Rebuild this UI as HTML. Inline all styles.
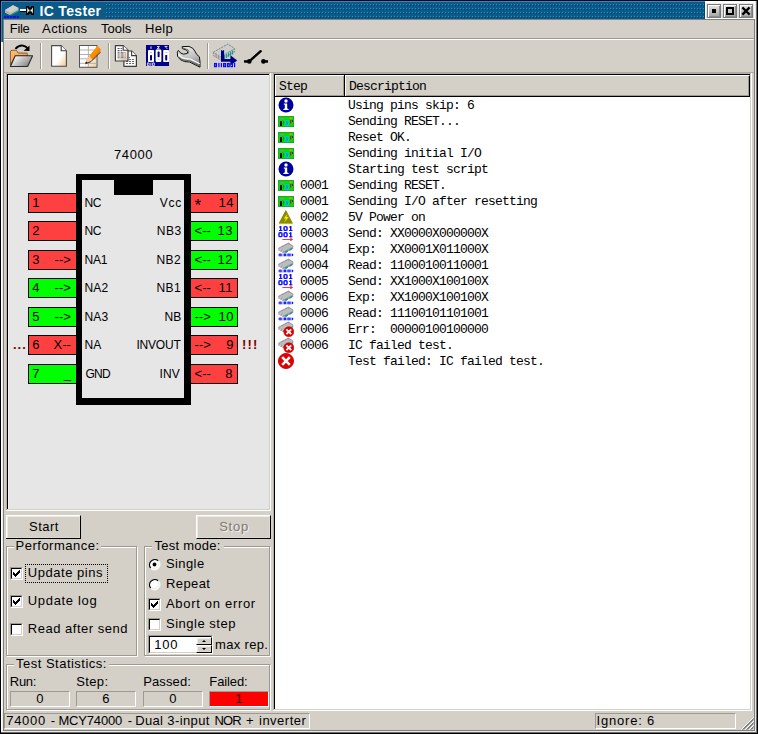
<!DOCTYPE html>
<html>
<head>
<meta charset="utf-8">
<title>IC Tester</title>
<style>
html,body{margin:0;padding:0;}
body{width:758px;height:734px;overflow:hidden;background:#000;position:relative;font-family:"Liberation Sans",sans-serif;font-size:14px;color:#000;}
.a{position:absolute;}
.t{position:absolute;white-space:nowrap;line-height:16px;height:16px;font-size:13px;letter-spacing:0.4px;}
.m{position:absolute;margin-top:1px;white-space:pre;font-family:"Liberation Mono",monospace;font-size:13px;letter-spacing:-0.8px;line-height:16px;height:16px;}
.pin{position:absolute;width:47px;height:18px;border:1px solid #000;}
.pin.rt{width:46px;}
.pin.r{background:#ff4040;}
.pin.g{background:#00ff00;}
.pin span{position:absolute;top:1px;line-height:16px;font-size:13px;letter-spacing:0.5px;white-space:pre;}
.lbl{position:absolute;line-height:16px;font-size:13px;white-space:nowrap;letter-spacing:0.25px;}
.groove{position:absolute;border:1px solid #9e9a92;box-shadow:1px 1px 0 #fff, inset 1px 1px 0 #fff;}
.sunk{position:absolute;border-top:1px solid #9e9a92;border-left:1px solid #9e9a92;border-right:1px solid #fff;border-bottom:1px solid #fff;box-sizing:border-box;}
.btn{position:absolute;box-sizing:border-box;border-top:1px solid #fff;border-left:1px solid #fff;border-right:1px solid #000;border-bottom:1px solid #000;background:#d4d0c8;}
.btn:after{content:"";position:absolute;left:0;top:0;right:0;bottom:0;border-left:1px solid #eceae4;border-top:1px solid #eceae4;border-right:1px solid #dcd8d0;border-bottom:1px solid #dcd8d0;}
.cb{position:absolute;width:13px;height:13px;box-sizing:border-box;background:#fff;border-top:1px solid #9e9a92;border-left:1px solid #9e9a92;border-right:1px solid #fff;border-bottom:1px solid #fff;}
.cb:after{content:"";position:absolute;left:0;top:0;width:10px;height:10px;border-top:1px solid #000;border-left:1px solid #000;border-right:1px solid #d4d0c8;border-bottom:1px solid #d4d0c8;box-sizing:content-box;width:9px;height:9px;}
.tb{top:4px;width:14px;height:14px;box-sizing:border-box;border:1px solid #7a7a7a;background:linear-gradient(#e6e6e6,#a4a4a4);box-shadow:inset 1px 1px 0 #fff, inset -1px -1px 0 #8e8e8e;}
.hd{box-sizing:border-box;background:#d4d0c8;border-top:1px solid #fff;border-left:1px solid #fff;border-right:1px solid #000;border-bottom:1px solid #000;box-shadow:inset -1px -1px 0 #9e9a92;}
</style>
</head>
<body>
<!-- window face -->
<div class="a" style="left:1px;top:1px;width:756px;height:732px;background:#d4d0c8;"></div>

<!-- ===== window frame ===== -->
<div class="a" style="left:1px;top:1px;width:1px;height:41px;background:#1890d8;"></div>
<div class="a" style="left:2px;top:1px;width:1px;height:41px;background:#0b5a88;"></div>
<div class="a" style="left:1px;top:42px;width:1px;height:690px;background:#fff;"></div>
<div class="a" style="left:2px;top:42px;width:1px;height:689px;background:#eeece8;"></div>
<div class="a" style="left:3px;top:19px;width:1px;height:712px;background:#808080;"></div>
<div class="a" style="left:754px;top:19px;width:1px;height:712px;background:#808080;"></div>
<div class="a" style="left:755px;top:1px;width:1px;height:731px;background:#e8e8e8;"></div>
<div class="a" style="left:756px;top:1px;width:1px;height:732px;background:#6e6e6e;"></div>
<div class="a" style="left:3px;top:730px;width:752px;height:1px;background:#808080;"></div>
<div class="a" style="left:2px;top:731px;width:754px;height:1px;background:#e8e8e8;"></div>
<div class="a" style="left:1px;top:732px;width:756px;height:1px;background:#6e6e6e;"></div>
<!-- ===== title bar ===== -->
<div class="a" style="left:2px;top:1px;width:703px;height:18px;background:#0b5a88;"></div>
<div class="a" style="left:1px;top:1px;width:704px;height:1px;background:#1890d8;"></div>
<svg class="a" style="left:104px;top:2px;" width="601" height="17" viewBox="104 2 601 17">
<defs><pattern id="dots" x="106" y="4" width="3" height="4" patternUnits="userSpaceOnUse"><rect x="0" y="0" width="1" height="1" fill="#1c94dc"/><rect x="1" y="1" width="1" height="1" fill="#073a5a"/></pattern></defs>
<rect x="106" y="4" width="599" height="14" fill="url(#dots)" shape-rendering="crispEdges"/>
</svg>
<div class="a" style="left:704px;top:2px;width:1px;height:17px;background:#06405f;"></div><div class="a" style="left:705px;top:1px;width:50px;height:18px;background:#fff;"></div><div class="a" style="left:706px;top:3px;width:48px;height:15px;background:linear-gradient(#ececec,#d8d8d8);"></div>
<div class="a" style="left:3px;top:19px;width:752px;height:1px;background:#808080;"></div>
<div class="a" id="ttl" style="left:39.4px;top:3px;line-height:16px;font-size:14px;font-weight:bold;color:#fff;white-space:nowrap;letter-spacing:0.35px;">IC Tester</div>
<!-- title buttons -->
<div class="a tb" style="left:707px;"></div>
<div class="a tb" style="left:723px;"></div>
<div class="a tb" style="left:739px;"></div>
<div class="a" style="left:712px;top:9px;width:4px;height:4px;background:#000;"></div>
<div class="a" style="left:726px;top:7px;width:4px;height:4px;border:2px solid #000;background:#c8c8c8;"></div>
<svg class="a" style="left:739px;top:4px;" width="14" height="14" viewBox="0 0 14 14"><path d="M4.2 4.2 L9.8 9.8 M9.8 4.2 L4.2 9.8" stroke="#000" stroke-width="2.3" stroke-linecap="square"/></svg>
<!-- ===== menu bar ===== -->
<div class="a" style="left:4px;top:38px;width:750px;height:1px;background:#9e9a92;"></div>
<div class="a" style="left:4px;top:39px;width:750px;height:1px;background:#fff;"></div>
<div class="t mn" id="m1" style="left:9.8px;top:21px;letter-spacing:-0.35px;">File</div>
<div class="t mn" id="m2" style="left:42.1px;top:21px;letter-spacing:0.4px;">Actions</div>
<div class="t mn" id="m3" style="left:101px;top:21px;letter-spacing:0px;">Tools</div>
<div class="t mn" id="m4" style="left:145px;top:21px;letter-spacing:0.35px;">Help</div>

<!-- ===== toolbar ===== -->
<div class="a" style="left:40px;top:43px;width:1px;height:26px;background:#9e9a92;"></div><div class="a" style="left:41px;top:43px;width:1px;height:26px;background:#fff;"></div>
<div class="a" style="left:108px;top:43px;width:1px;height:26px;background:#9e9a92;"></div><div class="a" style="left:109px;top:43px;width:1px;height:26px;background:#fff;"></div>
<div class="a" style="left:207px;top:43px;width:1px;height:26px;background:#9e9a92;"></div><div class="a" style="left:208px;top:43px;width:1px;height:26px;background:#fff;"></div>
<svg class="a" style="left:0px;top:0px;" width="280" height="74" viewBox="0 0 280 74">
<defs>
<linearGradient id="gFold" x1="0" y1="0" x2="1" y2="0.6"><stop offset="0" stop-color="#f4f4f4"/><stop offset="0.35" stop-color="#e0e0e0"/><stop offset="1" stop-color="#858585"/></linearGradient>
<linearGradient id="gOr" x1="0" y1="0" x2="1" y2="1"><stop offset="0" stop-color="#ffc27a"/><stop offset="1" stop-color="#e88a30"/></linearGradient>
<linearGradient id="gDoc" x1="0.2" y1="0.2" x2="1" y2="1"><stop offset="0" stop-color="#ffffff"/><stop offset="0.45" stop-color="#ffffff"/><stop offset="1" stop-color="#efc890"/></linearGradient>
<linearGradient id="gDoc2" x1="0.2" y1="0.2" x2="1" y2="1"><stop offset="0" stop-color="#ffffff"/><stop offset="0.5" stop-color="#fbf3ec"/><stop offset="1" stop-color="#e8b898"/></linearGradient>
<linearGradient id="gPen" x1="0" y1="0" x2="1" y2="1"><stop offset="0" stop-color="#ffb040"/><stop offset="0.5" stop-color="#ff8c00"/><stop offset="1" stop-color="#c86000"/></linearGradient>
<linearGradient id="gWr" x1="0" y1="0" x2="0.3" y2="1"><stop offset="0" stop-color="#f4f4f4"/><stop offset="0.6" stop-color="#c4c4c4"/><stop offset="1" stop-color="#8c8c8c"/></linearGradient>
</defs>
<!-- title icon: chip -->
<g id="tchip">
<path d="M5 10 L13 5.2 L18.5 8 L18.5 10.5 L10 15 L5 12.5 Z" fill="#c4c0bc"/>
<path d="M5 10 L13 5.2 L18.5 8 L10 12.5 Z" fill="#d2cecc"/>
<path d="M10.5 14.2 L18.5 10 L18.5 11.5 L10.5 15.6 Z" fill="#2f9a92"/>
<path d="M5 10 L10 12.5 L10 15 L5 12.5 Z" fill="#b4b0ac"/>
<rect x="4" y="16" width="15" height="2" fill="#0c14e8"/>
<rect x="6" y="16" width="1" height="2" fill="#0b5a88" opacity=".5"/><rect x="9" y="16" width="1" height="2" fill="#0b5a88" opacity=".6"/><rect x="12" y="16" width="1" height="2" fill="#0b5a88" opacity=".5"/><rect x="16" y="16" width="1" height="2" fill="#0b5a88" opacity=".6"/>
</g>
<rect x="20" y="11" width="7" height="1" fill="#000"/>
<rect x="20" y="9" width="7" height="2" fill="#fff"/>
<path d="M26 6 L28.5 6 L30 8 L31.5 6 L34 6 L34 15 L31.5 15 L30 13 L28.5 15 L26 15 Z" fill="#000"/>
<path d="M27.3 7.3 L29.2 10.4 L27.3 13.6 Z M32.8 7.3 L30.8 10.4 L32.8 13.6 Z" fill="#fff"/>
<rect x="29.6" y="9.6" width="0.9" height="1.8" fill="#fff"/>

<!-- open -->
<path d="M10.4 65 L10.4 52 Q10.4 50.3 12 50.3 L15.6 50.3 Q16.8 50.3 17.4 51.6 L18.2 53 L26.3 53 Q27.6 53 27.6 54.4 L27.6 56 L15.5 56 Z" fill="url(#gOr)" stroke="#6a4418" stroke-width="0.8"/>
<path d="M15.2 55.7 L32.6 55.7 L27.6 66.5 L10.4 66.5 Z" fill="url(#gFold)" stroke="#2a2a2a" stroke-width="1.1" stroke-linejoin="round"/>
<path d="M15.4 48.8 Q18.6 45.2 22.4 45.5 Q25.4 45.8 27.6 48.2" fill="none" stroke="#000" stroke-width="1.9"/>
<path d="M29.5 45.4 L29.5 50.9 L23.6 50.7 Z" fill="#000"/>
<!-- new -->
<path d="M51.6 45.6 L61.2 45.6 L66.4 50.8 L66.4 66.2 L51.6 66.2 Z" fill="url(#gDoc)" stroke="#4a4a4a" stroke-width="1.1" stroke-linejoin="round"/>
<path d="M61.2 45.6 L61.2 50.8 L66.4 50.8" fill="#f6f6f6" stroke="#3a3a3a" stroke-width="1.1" stroke-linejoin="round"/>
<!-- edit -->
<rect x="79.5" y="45.5" width="17.5" height="21.8" fill="url(#gDoc)" stroke="#555" stroke-width="1"/>
<path d="M80 50H97M80 54.5H97M80 58.8H97M80 63.3H97M88.4 46V67" stroke="#a8a8a8" stroke-width="0.9" fill="none"/>
<path d="M85.2 63.6 L87.3 58.2 L97.2 46 L100.6 48.8 L100.4 52 L91 61.4 Z" fill="url(#gPen)"/>
<path d="M85.2 63.6 L87.3 58.2 L89.6 56 L92.6 59.8 L91 61.4 Z" fill="#f6c8a4"/>
<path d="M85.2 63.6 L86 61.4 L87.6 62.7 Z" fill="#111"/>
<path d="M85.4 63.8 L91 61.6 L100.4 52.2" stroke="#222" stroke-width="0.9" fill="none"/>
<!-- copy -->
<path d="M123.9 51 L131.6 51 L136.4 55.6 L136.4 66.3 L123.9 66.3 Z" fill="#fbfbfb" stroke="#3c3c3c" stroke-width="1.2" stroke-linejoin="round"/>
<path d="M131.6 51 L131.6 55.6 L136.4 55.6" fill="#fff" stroke="#3c3c3c" stroke-width="1.1"/>
<path d="M126 57.5h4M126 59.5h8M126 61.5h8M126 63.5h8" stroke="#6a6a6a" stroke-width="1.1" stroke-dasharray="2 1"/>
<path d="M115.4 45.6 L123.2 45.6 L128 50.2 L128 61 L115.4 61 Z" fill="url(#gDoc2)" stroke="#3c3c3c" stroke-width="1.2" stroke-linejoin="round"/>
<path d="M123.2 45.6 L123.2 50.2 L128 50.2" fill="#fff" stroke="#3c3c3c" stroke-width="1.1"/>
<path d="M117.6 48.5h4.5M117.6 50.6h4.5M117.6 52.8h8M117.6 55h8M117.6 57.2h8" stroke="#5c5c5c" stroke-width="1.2" stroke-dasharray="2 1 3 1"/>
<path d="M117.6 58.9h8" stroke="#a0a0a0" stroke-width="0.6"/>
<!-- dip switch -->
<rect x="146" y="45" width="23" height="21" fill="#00008a"/>
<rect x="148" y="50" width="6" height="12" rx="0.8" fill="#fff"/><rect x="155.6" y="49.6" width="5.8" height="12.3" rx="0.8" fill="#fff"/><rect x="163.2" y="50" width="5.8" height="12" rx="0.8" fill="#fff"/>
<rect x="150" y="55" width="2" height="5.4" rx="0.6" fill="#00008a"/><rect x="157.6" y="51.6" width="2" height="5.6" rx="0.6" fill="#00008a"/><rect x="165.2" y="55" width="2" height="5.4" rx="0.6" fill="#00008a"/>
<rect x="150" y="52" width="2" height="1" fill="#c4c4c4"/><rect x="157.6" y="58.8" width="2" height="1" fill="#c4c4c4"/><rect x="165.2" y="52" width="2" height="1" fill="#c4c4c4"/>
<path d="M151 46.3v2.6M157 46.6h2.4l-2.2 2.2h2.4M164.6 46.4h2.6l-1.2 1.2 1.2 1.2" stroke="#ffffff" stroke-width="0.9" fill="none"/>
<path d="M147.4 62.9h1.7v2.9h-1.7zM150.9 62.6v3.4M152.6 62.9h1.7v2.9h-1.7z" stroke="#fff" stroke-width="0.8" fill="none"/>
<!-- wrench -->
<path d="M182.2 46.6 L189 46.4 Q193.6 47.6 195.4 52 Q196.2 54.8 199.4 56.8 L200 61.8 L200 67.2 L189.6 62 L184.6 61.6 Q179.4 60.2 177.6 56.4 L177.3 52.2 L178.4 50.4 Q180.4 54 183.6 54.2 L187.4 53.4 Q188.4 51.4 186.4 50 L182.4 48.6 Z" fill="url(#gWr)" stroke="#111" stroke-width="1" stroke-linejoin="round"/>
<path d="M178.6 54.5 Q181 58 185.2 58.6 L190.4 59 L199.8 63.8" stroke="#fff" stroke-width="1.1" fill="none"/>
<path d="M178.4 57 Q181 60 185.4 60.4 L190 61 L199.8 66" stroke="#6a6a6a" stroke-width="1.2" fill="none"/>
<path d="M183.2 48 L188 49.8 Q189.6 51.4 188.4 53.4" stroke="#777" stroke-width="1" fill="none"/>
<!-- ic read -->
<path d="M213.4 52.2 L227.8 44.2 L234.6 48.6 L234.6 52 L220.6 60 L213.4 55.6 Z" fill="#c2c2c2" stroke="#858585" stroke-width="0.9" stroke-dasharray="2 1"/>
<path d="M213.4 52.2 L227.8 44.2 L234.6 48.6 L220.6 56.6 Z" fill="#cdcdcd" stroke="#8a8a8a" stroke-width="0.9" stroke-dasharray="2 1"/>
<path d="M216 54.2v2.6M218.6 55.8v2.6" stroke="#8a8a8a" stroke-width="0.9"/>
<path d="M224.6 55v4M226.6 54v4M228.6 52.8v4M230.6 51.6v4M232.6 50.4v4" stroke="#0a9a94" stroke-width="1.1"/>
<path d="M221 50.2 L222 50.2 L222.6 51 L223.2 50.2 L224.1 50.2 L224.1 59 L230.4 59 L230.4 55.2 L237.2 60.5 L230.4 65.4 L230.4 61.8 L221 61.8 Z" fill="#00007e"/>
<g fill="none" stroke="#0808ff" stroke-width="1.25">
<rect x="214.6" y="63.6" width="1.8" height="3"/><path d="M218.9 63v4.2M221.4 63v4.2"/><rect x="223.6" y="63.6" width="1.8" height="3"/><rect x="227.4" y="63.6" width="1.8" height="3"/><rect x="231" y="63.6" width="1.4" height="3"/><path d="M234.6 63v4.2"/>
</g>
<!-- switch -->
<rect x="244" y="60.2" width="5.5" height="2.5" fill="#000"/><circle cx="249.3" cy="61.4" r="2.3" fill="#000"/>
<path d="M249.5 61.2 L260.7 51.2" stroke="#000" stroke-width="2.4" stroke-linecap="round"/>
<circle cx="263.4" cy="61.4" r="2.3" fill="#000"/><rect x="263.4" y="60.2" width="4.6" height="2.5" fill="#000"/>
</svg>

<!-- ===== left panel (chip view) ===== -->
<div class="a" style="left:4px;top:72px;width:750px;height:1px;background:#aeaaa2;"></div>
<div class="a" style="left:6px;top:73px;width:264px;height:437px;background:#b2aea6;"></div>
<div class="a" style="left:7px;top:74px;width:263px;height:436px;background:#000;"></div>
<div class="a" style="left:8px;top:75px;width:261px;height:434px;background:#e6e6e6;"></div>
<div class="a" style="left:8px;top:75px;width:261px;height:1px;background:#f2f2f2;"></div>
<div class="a" style="left:8px;top:75px;width:1px;height:434px;background:#f2f2f2;"></div>
<div class="a" style="left:6px;top:510px;width:265px;height:1px;background:#fff;"></div>
<div class="a" style="left:270px;top:73px;width:1px;height:438px;background:#fff;"></div>
<div class="a" style="left:269px;top:74px;width:1px;height:436px;background:#d4d0c8;"></div>
<div class="a" style="left:7px;top:509px;width:263px;height:1px;background:#d4d0c8;"></div>
<!-- chip body -->
<div class="a" style="left:76px;top:174px;width:115px;height:231px;background:#000;"></div>
<div class="a" style="left:82px;top:180px;width:102px;height:218px;background:#e6e6e6;"></div>
<div class="a" style="left:114px;top:180px;width:39px;height:15px;background:#000;"></div>
<div class="lbl" id="cn" style="left:100.6px;top:147px;width:66px;text-align:center;letter-spacing:0.6px;">74000</div>
<div class="pin r" style="left:28px;top:193px;"><span style="left:3.2px;">1</span><span style="right:5px;letter-spacing:0.05px;"></span></div><div class="pin r" style="left:28px;top:221px;"><span style="left:3.2px;">2</span><span style="right:5px;letter-spacing:0.05px;"></span></div><div class="pin r" style="left:28px;top:250px;"><span style="left:3.2px;">3</span><span style="right:5px;letter-spacing:0.05px;">--&gt;</span></div><div class="pin g" style="left:28px;top:278px;"><span style="left:3.2px;">4</span><span style="right:5px;letter-spacing:0.05px;">--&gt;</span></div><div class="pin g" style="left:28px;top:307px;"><span style="left:3.2px;">5</span><span style="right:5px;letter-spacing:0.05px;">--&gt;</span></div><div class="pin r" style="left:28px;top:335px;"><span style="left:3.2px;">6</span><span style="right:5px;letter-spacing:0.05px;">X--</span></div><div class="pin g" style="left:28px;top:364px;"><span style="left:3.2px;">7</span><span style="right:5px;letter-spacing:0.05px;">_</span></div><div class="pin r rt" style="left:190px;top:193px;"><span style="left:3.5px;font-size:17px;top:4px;">*</span><span style="right:3px;">14</span></div><div class="pin g rt" style="left:190px;top:221px;"><span style="left:3.6px;letter-spacing:0.05px;">&lt;--</span><span style="right:4px;">13</span></div><div class="pin g rt" style="left:190px;top:250px;"><span style="left:3.6px;letter-spacing:0.05px;">&lt;--</span><span style="right:4px;">12</span></div><div class="pin r rt" style="left:190px;top:278px;"><span style="left:3.6px;letter-spacing:0.05px;">&lt;--</span><span style="right:4px;">11</span></div><div class="pin g rt" style="left:190px;top:307px;"><span style="left:3.6px;letter-spacing:0.05px;">--&gt;</span><span style="right:3px;">10</span></div><div class="pin r rt" style="left:190px;top:335px;"><span style="left:3.6px;letter-spacing:0.05px;">--&gt;</span><span style="right:3px;">9</span></div><div class="pin r rt" style="left:190px;top:364px;"><span style="left:3.6px;letter-spacing:0.05px;">&lt;--</span><span style="right:4px;">8</span></div><div class="lbl" style="left:84.4px;top:195px;font-size:12px;letter-spacing:-0.40px;">NC</div><div class="lbl" style="left:84.4px;top:223px;font-size:12px;letter-spacing:-0.40px;">NC</div><div class="lbl" style="left:84.5px;top:252px;font-size:12px;letter-spacing:-0.15px;">NA1</div><div class="lbl" style="left:84.5px;top:280px;font-size:12px;letter-spacing:0.20px;">NA2</div><div class="lbl" style="left:84.5px;top:309px;font-size:12px;letter-spacing:0.20px;">NA3</div><div class="lbl" style="left:84.5px;top:337px;font-size:12px;letter-spacing:0.10px;">NA</div><div class="lbl" style="left:85.5px;top:366px;font-size:12px;letter-spacing:-0.75px;">GND</div><div class="lbl" style="left:159.7px;top:195px;font-size:12px;letter-spacing:0.80px;">Vcc</div>
<div class="lbl" style="left:156.7px;top:223px;font-size:12px;letter-spacing:0.55px;">NB3</div>
<div class="lbl" style="left:156.5px;top:252px;font-size:12px;letter-spacing:0.40px;">NB2</div>
<div class="lbl" style="left:156.5px;top:280px;font-size:12px;letter-spacing:0.40px;">NB1</div>
<div class="lbl" style="left:164.4px;top:309px;font-size:12px;letter-spacing:0.30px;">NB</div>
<div class="lbl" style="left:136.5px;top:337px;font-size:12px;letter-spacing:-0.22px;">INVOUT</div>
<div class="lbl" style="left:159.5px;top:366px;font-size:12px;letter-spacing:0.10px;">INV</div>
<div class="lbl" style="left:13px;top:337px;color:#800000;font-weight:bold;letter-spacing:1px;">...</div>
<div class="lbl" style="left:242px;top:337px;color:#800000;font-weight:bold;letter-spacing:1.2px;">!!!</div>

<!-- ===== buttons ===== -->
<div class="btn" style="left:6px;top:515px;width:75px;height:24px;"></div>
<div class="a" style="left:6px;top:538px;width:1px;height:1px;background:#000;"></div><div class="a" style="left:196px;top:538px;width:1px;height:1px;background:#000;"></div><div class="t" style="left:6.5px;top:519px;width:75px;text-align:center;letter-spacing:0.5px;">Start</div>
<div class="btn" style="left:196px;top:515px;width:75px;height:24px;"></div>
<div class="t" style="left:197.5px;top:520px;width:75px;text-align:center;color:#f4f2ee;letter-spacing:0.75px;">Stop</div>
<div class="t" style="left:196.5px;top:519px;width:75px;text-align:center;color:#7c7870;letter-spacing:0.75px;">Stop</div>
<!-- ===== Performance group ===== -->
<div class="groove" style="left:6px;top:546px;width:129px;height:108px;"></div>
<div class="a" style="left:14px;top:546px;width:87px;height:2px;background:#d4d0c8;"></div><div class="t" id="g1" style="left:15.5px;top:538px;letter-spacing:0.51px;">Performance:</div>
<div class="a" style="left:25px;top:564px;width:81px;height:17px;border:1px dotted #000;box-sizing:content-box;"></div>
<div class="cb" style="left:10px;top:567px;"></div>
<div class="cb" style="left:10px;top:595px;"></div>
<div class="cb" style="left:10px;top:623px;"></div>
<svg class="a ck" style="left:13px;top:570px;" width="7" height="7" viewBox="0 0 7 7"><path d="M0 2h1v3h-1zM1 3h1v3h-1zM2 4h1v3h-1zM3 3h1v3h-1zM4 2h1v3h-1zM5 1h1v3h-1zM6 0h1v3h-1z" fill="#000" shape-rendering="crispEdges"/></svg>
<svg class="a ck" style="left:13px;top:598px;" width="7" height="7" viewBox="0 0 7 7"><path d="M0 2h1v3h-1zM1 3h1v3h-1zM2 4h1v3h-1zM3 3h1v3h-1zM4 2h1v3h-1zM5 1h1v3h-1zM6 0h1v3h-1z" fill="#000" shape-rendering="crispEdges"/></svg>
<div class="t" style="left:27.8px;top:565px;letter-spacing:0.53px;">Update pins</div>
<div class="t" style="left:27.8px;top:593px;letter-spacing:0.67px;">Update log</div>
<div class="t" style="left:27.8px;top:621px;letter-spacing:0.51px;">Read after send</div>
<!-- ===== Test mode group ===== -->
<div class="groove" style="left:144px;top:546px;width:124px;height:108px;"></div>
<div class="a" style="left:152px;top:546px;width:72px;height:2px;background:#d4d0c8;"></div><div class="t" id="g2" style="left:154.5px;top:538px;letter-spacing:0.24px;">Test mode:</div>
<svg class="a" style="left:148px;top:558px;" width="13" height="33" viewBox="0 0 13 33">
<g id="rad"><circle cx="6.5" cy="6.5" r="5.2" fill="#fff"/><path d="M2.8 10.2 A5.25 5.25 0 0 1 10.2 2.8" fill="none" stroke="#000" stroke-width="1.3"/><path d="M10.4 2.6 A5.5 5.5 0 0 1 2.6 10.4" fill="none" stroke="#fff" stroke-width="1"/><path d="M9.6 3.4 A4.4 4.4 0 0 1 3.4 9.6" fill="none" stroke="#e8e6e0" stroke-width="0.9"/></g>
<use href="#rad" y="20"/>
<circle cx="6.5" cy="6.5" r="1.9" fill="#000"/>
</svg>
<div class="t" style="left:166px;top:556px;">Single</div>
<div class="t" style="left:166px;top:576px;">Repeat</div>
<div class="cb" style="left:148px;top:598px;"></div>
<div class="cb" style="left:148px;top:618px;"></div>
<svg class="a ck" style="left:151px;top:601px;" width="7" height="7" viewBox="0 0 7 7"><path d="M0 2h1v3h-1zM1 3h1v3h-1zM2 4h1v3h-1zM3 3h1v3h-1zM4 2h1v3h-1zM5 1h1v3h-1zM6 0h1v3h-1z" fill="#000" shape-rendering="crispEdges"/></svg>
<div class="t" style="left:166px;top:596px;letter-spacing:0.69px;">Abort on error</div>
<div class="t" style="left:166px;top:616px;letter-spacing:0.51px;">Single step</div>
<!-- spin box -->
<div class="a" style="left:148px;top:635px;width:65px;height:19px;box-sizing:border-box;background:#fff;border-top:1px solid #9e9a92;border-left:1px solid #9e9a92;border-right:1px solid #fff;border-bottom:1px solid #fff;"></div>
<div class="a" style="left:149px;top:636px;width:63px;height:17px;box-sizing:border-box;border-top:1px solid #000;border-left:1px solid #000;border-right:1px solid #d4d0c8;border-bottom:1px solid #d4d0c8;"></div>
<div class="btn" style="left:196px;top:637px;width:16px;height:8px;"></div>
<div class="btn" style="left:196px;top:645px;width:16px;height:8px;"></div>
<svg class="a" style="left:200px;top:639px;" width="8" height="12" viewBox="0 0 8 12"><path d="M2 3 L6 3 L4 1 Z M2 9 L6 9 L4 11 Z" fill="#000"/></svg>
<div class="t" style="left:154.2px;top:637px;letter-spacing:0.8px;">100</div>
<div class="t" style="left:215px;top:637px;letter-spacing:0.33px;">max rep.</div>
<!-- ===== Test statistics ===== -->
<div class="groove" style="left:6px;top:664px;width:262px;height:44px;"></div>
<div class="a" style="left:14px;top:664px;width:95px;height:2px;background:#d4d0c8;"></div><div class="t" id="g3" style="left:16px;top:656px;letter-spacing:0.49px;">Test Statistics:</div>
<div class="t" style="left:9.8px;top:674px;letter-spacing:-0.3px;">Run:</div>
<div class="t" style="left:76.3px;top:674px;letter-spacing:0.35px;">Step:</div>
<div class="t" style="left:143.2px;top:674px;letter-spacing:0.13px;">Passed:</div>
<div class="t" style="left:209.3px;top:674px;letter-spacing:-0.1px;">Failed:</div>
<div class="sunk" style="left:10px;top:691px;width:60px;height:16px;"></div>
<div class="sunk" style="left:76px;top:691px;width:60px;height:16px;"></div>
<div class="sunk" style="left:143px;top:691px;width:60px;height:16px;"></div>
<div class="sunk" style="left:209px;top:691px;width:60px;height:16px;background:#ff0000;"></div>
<div class="t" style="left:10px;top:691px;width:60px;text-align:center;">0</div>
<div class="t" style="left:76px;top:691px;width:60px;text-align:center;">6</div>
<div class="t" style="left:143px;top:691px;width:60px;text-align:center;">0</div>
<div class="t" style="left:209px;top:691px;width:60px;text-align:center;color:#300000;">1</div>
<!-- ===== status bar ===== -->
<div class="sunk" style="left:4px;top:713px;width:306px;height:16px;"></div>
<div class="t" style="left:6.2px;top:713px;letter-spacing:0.72px;">74000</div><div class="t" style="left:50.7px;top:713px;letter-spacing:0.00px;">-</div><div class="t" style="left:58.4px;top:713px;letter-spacing:-0.16px;">MCY74000</div><div class="t" style="left:127.8px;top:713px;letter-spacing:0.00px;">-</div><div class="t" style="left:135.2px;top:713px;letter-spacing:0.3px;">Dual</div><div class="t" style="left:167.3px;top:713px;letter-spacing:0.4px;">3-input</div><div class="t" style="left:214.4px;top:713px;letter-spacing:-0.85px;">NOR</div><div class="t" style="left:246.0px;top:713px;letter-spacing:0.00px;">+</div><div class="t" style="left:259.0px;top:713px;letter-spacing:0.5px;">inverter</div>
<div class="sunk" style="left:595px;top:713px;width:141px;height:16px;"></div>
<div class="t" style="left:596.5px;top:713px;letter-spacing:0.8px;">Ignore: 6</div>
<svg class="a" style="left:740px;top:716px;" width="14" height="14" viewBox="740 716 14 14"><path d="M741.5 729.5 L753.5 717.5 M745.5 729.5 L753.5 721.5 M749.5 729.5 L753.5 725.5" stroke="#fff" stroke-width="1"/><path d="M742.5 729.5 L753.5 718.5 M743.5 729.5 L753.5 719.5 M746.5 729.5 L753.5 722.5 M747.5 729.5 L753.5 723.5 M750.5 729.5 L753.5 726.5 M751.5 729.5 L753.5 727.5" stroke="#808080" stroke-width="1"/></svg>

<!-- ===== right panel: list ===== -->
<div class="a" style="left:273px;top:73px;width:479px;height:638px;background:#fff;"></div>
<div class="a" style="left:273px;top:73px;width:478px;height:637px;background:#b2aea6;"></div>
<div class="a" style="left:274px;top:74px;width:477px;height:636px;background:#d4d0c8;"></div>
<div class="a" style="left:274px;top:74px;width:476px;height:635px;background:#000;"></div>
<div class="a" style="left:275px;top:75px;width:475px;height:634px;background:#fff;"></div>
<!-- header -->
<div class="a" style="left:275px;top:75px;width:475px;height:22px;background:#000;"></div>
<div class="a hd" style="left:275px;top:75px;width:70px;height:22px;"></div>
<div class="a hd" style="left:345px;top:75px;width:405px;height:22px;"></div>
<div class="a" style="left:275px;top:96px;width:475px;height:1px;background:#000;"></div><div class="a" style="left:344px;top:75px;width:1px;height:22px;background:#000;"></div>
<div class="m" style="left:279px;top:78px;">Step</div>
<div class="m" style="left:349px;top:78px;">Description</div>
<svg width="0" height="0" style="position:absolute">
<defs>
<g id="i-info"><circle cx="8" cy="8" r="7.5" fill="#00009c"/><circle cx="8" cy="4" r="1.7" fill="#fff"/><path d="M5.8 6.6 L9.2 6.6 L9.2 11.6 L10.6 12 L10.6 13 L5.4 13 L5.4 12 L6.8 11.6 L6.8 7.8 L5.8 7.6 Z" fill="#fff"/></g>
<g id="i-board"><rect x="0.5" y="3.5" width="15" height="10" fill="#00e000" stroke="#2aa62a" stroke-width="1"/><rect x="2" y="8" width="2" height="5" fill="#000"/><rect x="2" y="5" width="4" height="1.4" fill="#8a8aa0"/><rect x="7" y="7" width="4" height="6" fill="#00c8d8"/><rect x="8" y="8" width="2" height="4" fill="#10a0b0"/><rect x="12" y="7" width="1.3" height="3.4" fill="#e01010"/><rect x="11" y="4.6" width="3.4" height="1" fill="#ff8c10"/><rect x="14" y="7" width="1" height="2" fill="#006000"/><rect x="5" y="8" width="1" height="4" fill="#00a000"/></g>
<g id="i-warn"><path d="M7.8 2 L14.2 14.2 L1.4 14.2 Z" fill="#8a8a00" stroke="#8a8a00" stroke-width="1.2" stroke-linejoin="round"/><path d="M9.6 4.8 L5.6 9.6 L8 9.6 L6.2 13.6 L10.8 8 L8.4 8 Z" fill="#f0f000"/><path d="M1 15.2 H14.6" stroke="#f2f2a0" stroke-width="0.8"/></g>
<g id="i-send"><g fill="none" stroke="#1010ff" stroke-width="1.4" transform="translate(-0.4 0) scale(1.06 1)"><rect x="6.1" y="1.6" width="2.8" height="3.8" rx="0.9"/><rect x="1.3" y="7.8" width="2.8" height="3.8" rx="0.9"/><rect x="6.1" y="7.8" width="2.8" height="3.8" rx="0.9"/><path d="M2.9 1 V6 M12.4 1 V6 M12.4 7.2 V12.2"/><path d="M1.4 2.4 L2.9 1.5 M10.9 2.4 L12.4 1.5 M10.9 8.6 L12.4 7.7 M1.3 5.6 H4.5 M10.8 5.6 H14 M10.8 11.8 H14" stroke-width="1"/></g><path d="M4.4 14.5 H14 M12 13 L14.6 14.5 L12 16" stroke="#ff2020" stroke-width="0.9" fill="none"/></g>
<g id="i-chipb"><path d="M0.5 7.2 L10.5 2 L15.3 5.2 L15.3 7.4 L6 12.2 L0.5 9.2 Z" fill="#a2a2a2"/><path d="M0.5 7.2 L10.5 2 L15.3 5.2 L6 10.2 Z" fill="#bcbcbc"/><path d="M0.5 7.2 L6 10.2 L6 12.2 L0.5 9.2 Z" fill="#9a9a9a"/><ellipse cx="2.1" cy="8.9" rx="1" ry="0.9" fill="#c8c8c8"/><ellipse cx="4.4" cy="10.1" rx="1" ry="0.9" fill="#c8c8c8"/><path d="M7 10.6 L10.2 8.9 L10.2 10.6 L7.4 12.4 Z M11.4 8.3 L14.4 6.7 L14.4 8.2 L11.6 9.9 Z" fill="#1f9696"/><path d="M0.5 7.2 L10.5 2 L15.3 5.2" fill="none" stroke="#8a8a8a" stroke-width="0.7"/><path d="M4.2 5.6 l1 -0.5 M7.4 3.9 l1 -0.5 M10.2 2.6 l1 .7" stroke="#787878" stroke-width="0.8"/></g>
<g id="i-chip"><use href="#i-chipb"/><g fill="#2020ff"><rect x="0.3" y="12.4" width="15" height="3" rx="1.2" opacity="0.3"/><rect x="0.6" y="12.6" width="3.4" height="2.6" rx="1.2" opacity="0.75"/><circle cx="6.9" cy="13.9" r="1.35"/><rect x="9.2" y="12.6" width="3.6" height="2.6" rx="1" opacity="0.75"/><rect x="13.9" y="12.8" width="1.2" height="2.2" rx="0.5"/></g></g>
<g id="i-chiperr"><use href="#i-chipb" y="-1"/><circle cx="10.8" cy="10.8" r="5" fill="#e00000" stroke="#c00000" stroke-width="0.6"/><path d="M8.4 8.4 L13.2 13.2 M13.2 8.4 L8.4 13.2" stroke="#fff" stroke-width="1.9"/></g>
<g id="i-err"><circle cx="8" cy="8" r="7.6" fill="#e00000" stroke="#b00000" stroke-width="0.8"/><path d="M4.2 4.2 L11.8 11.8 M11.8 4.2 L4.2 11.8" stroke="#fff" stroke-width="2.5"/></g>
</defs></svg>
<svg class="a" style="left:278px;top:97px;" width="16" height="16" viewBox="0 0 16 16"><use href="#i-info"/></svg><div class="m" style="left:348px;top:97px;">Using pins skip: 6</div>
<svg class="a" style="left:278px;top:113px;" width="16" height="16" viewBox="0 0 16 16"><use href="#i-board"/></svg><div class="m" style="left:348px;top:113px;">Sending RESET...</div>
<svg class="a" style="left:278px;top:129px;" width="16" height="16" viewBox="0 0 16 16"><use href="#i-board"/></svg><div class="m" style="left:348px;top:129px;">Reset OK.</div>
<svg class="a" style="left:278px;top:145px;" width="16" height="16" viewBox="0 0 16 16"><use href="#i-board"/></svg><div class="m" style="left:348px;top:145px;">Sending initial I/O</div>
<svg class="a" style="left:278px;top:161px;" width="16" height="16" viewBox="0 0 16 16"><use href="#i-info"/></svg><div class="m" style="left:348px;top:161px;">Starting test script</div>
<svg class="a" style="left:278px;top:177px;" width="16" height="16" viewBox="0 0 16 16"><use href="#i-board"/></svg><div class="m" style="left:300px;top:177px;">0001</div><div class="m" style="left:348px;top:177px;">Sending RESET.</div>
<svg class="a" style="left:278px;top:193px;" width="16" height="16" viewBox="0 0 16 16"><use href="#i-board"/></svg><div class="m" style="left:300px;top:193px;">0001</div><div class="m" style="left:348px;top:193px;">Sending I/O after resetting</div>
<svg class="a" style="left:278px;top:209px;" width="16" height="16" viewBox="0 0 16 16"><use href="#i-warn"/></svg><div class="m" style="left:300px;top:209px;">0002</div><div class="m" style="left:348px;top:209px;">5V Power on</div>
<svg class="a" style="left:278px;top:225px;" width="16" height="16" viewBox="0 0 16 16"><use href="#i-send"/></svg><div class="m" style="left:300px;top:225px;">0003</div><div class="m" style="left:348px;top:225px;">Send: XX0000X000000X</div>
<svg class="a" style="left:278px;top:241px;" width="16" height="16" viewBox="0 0 16 16"><use href="#i-chip"/></svg><div class="m" style="left:300px;top:241px;">0004</div><div class="m" style="left:348px;top:241px;">Exp:  XX0001X011000X</div>
<svg class="a" style="left:278px;top:257px;" width="16" height="16" viewBox="0 0 16 16"><use href="#i-chip"/></svg><div class="m" style="left:300px;top:257px;">0004</div><div class="m" style="left:348px;top:257px;">Read: 11000100110001</div>
<svg class="a" style="left:278px;top:273px;" width="16" height="16" viewBox="0 0 16 16"><use href="#i-send"/></svg><div class="m" style="left:300px;top:273px;">0005</div><div class="m" style="left:348px;top:273px;">Send: XX1000X100100X</div>
<svg class="a" style="left:278px;top:289px;" width="16" height="16" viewBox="0 0 16 16"><use href="#i-chip"/></svg><div class="m" style="left:300px;top:289px;">0006</div><div class="m" style="left:348px;top:289px;">Exp:  XX1000X100100X</div>
<svg class="a" style="left:278px;top:305px;" width="16" height="16" viewBox="0 0 16 16"><use href="#i-chip"/></svg><div class="m" style="left:300px;top:305px;">0006</div><div class="m" style="left:348px;top:305px;">Read: 11100101101001</div>
<svg class="a" style="left:278px;top:321px;" width="16" height="16" viewBox="0 0 16 16"><use href="#i-chiperr"/></svg><div class="m" style="left:300px;top:321px;">0006</div><div class="m" style="left:348px;top:321px;">Err:  00000100100000</div>
<svg class="a" style="left:278px;top:337px;" width="16" height="16" viewBox="0 0 16 16"><use href="#i-chiperr"/></svg><div class="m" style="left:300px;top:337px;">0006</div><div class="m" style="left:348px;top:337px;">IC failed test.</div>
<svg class="a" style="left:278px;top:353px;" width="16" height="16" viewBox="0 0 16 16"><use href="#i-err"/></svg><div class="m" style="left:348px;top:353px;">Test failed: IC failed test.</div>


<!-- SECTIONS -->
</body>
</html>
